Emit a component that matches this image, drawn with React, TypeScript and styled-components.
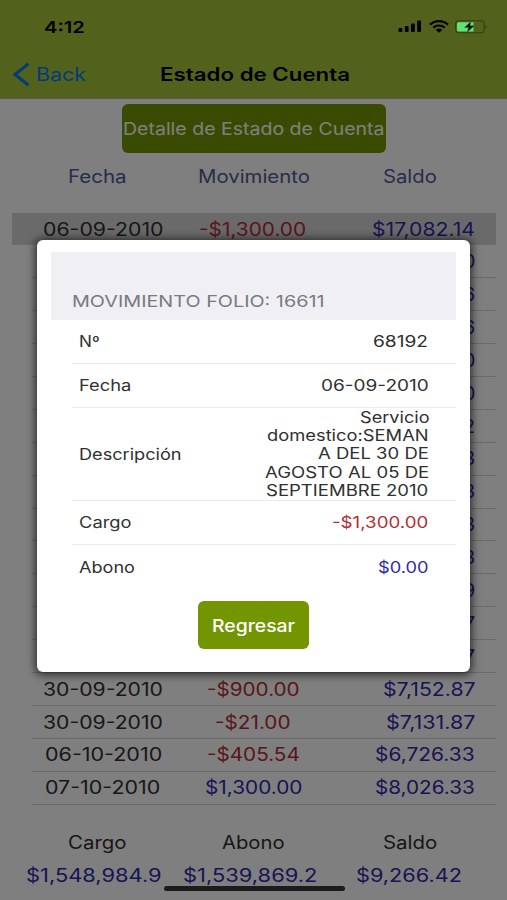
import React, { useLayoutEffect, useRef, useState } from 'react';
import styled, { createGlobalStyle } from 'styled-components';

const GlobalStyle = createGlobalStyle`
  * { box-sizing: border-box; }
  body { margin: 0; background: #fff; font-family: Inter, "Liberation Sans", sans-serif; }
`;

const RED = '#b42c34';
const BLUE = '#3228a8';

const Screen = styled.div`
  position: relative;
  width: 507px;
  height: 900px;
  overflow: hidden;
  background: #fff;
  color: #303030;
  display: flex;
  flex-direction: column;
`;

const FitBox = styled.span<{ $w: number; $size: number; $weight: number; $color?: string }>`
  display: inline-block;
  flex: none;
  width: ${p => p.$w}px;
  font-size: ${p => p.$size}px;
  font-weight: ${p => p.$weight};
  line-height: 1;
  padding-top: 1.5px;
  color: ${p => p.$color ?? 'inherit'};
  text-align: left;
  white-space: nowrap;
`;

const FitInner = styled.span`
  display: inline-block;
  transform-origin: 0 50%;
`;

type FitProps = { w: number; size?: number; weight?: number; color?: string; children: string };

/* Expanded type: stretches its text horizontally to fill the given width. */
function Fit({ w, size = 18, weight = 400, color, children }: FitProps) {
  const ref = useRef<HTMLSpanElement>(null);
  const [scale, setScale] = useState(1.2);
  const full = w + 1;
  useLayoutEffect(() => {
    if (ref.current) setScale(full / ref.current.offsetWidth);
  }, [full, children]);
  return (
    <FitBox $w={full} $size={size} $weight={weight} $color={color}>
      <FitInner ref={ref} style={{ transform: `scaleX(${scale})` }}>{children}</FitInner>
    </FitBox>
  );
}

const Header = styled.header`
  height: 98.5px;
  flex: none;
  background: #a4c438;
  border-bottom: 1px solid #b0b8a0;
  color: #000;
`;

const StatusBar = styled.div`
  height: 53px;
  display: flex;
  align-items: center;
  justify-content: space-between;
  padding: 0 18px 0 43.5px;
`;

const StatusIcons = styled.div`
  display: flex;
  align-items: center;
  gap: 7px;
  svg { display: block; }
`;

const NavBar = styled.div`
  height: 42px;
  display: grid;
  grid-template-columns: 159.5px 191px 1fr;
  align-items: center;
`;

const BackLink = styled.div`
  display: flex;
  align-items: center;
  gap: 6px;
  padding-left: 12px;
  color: #0a78f0;
`;

const Button = styled.button<{ $w: number }>`
  width: ${p => p.$w}px;
  height: 48.5px;
  flex: none;
  border: 0;
  padding: 0;
  border-radius: 6px;
  background: #739600;
  color: #fff;
  font-family: inherit;
  display: flex;
  align-items: center;
  justify-content: center;
`;

const DetailBar = styled.div`
  padding: 5.5px 0 0 0.5px;
  display: flex;
  justify-content: center;
`;

const Triple = styled.div<{ $h: number }>`
  flex: none;
  height: ${p => p.$h}px;
  padding: 0 18.75px;
  display: grid;
  grid-template-columns: repeat(3, 1fr);
  align-items: center;
  justify-items: center;
`;

const TotalValue = styled.div<{ $shift?: boolean }>`
  display: flex;
  padding-right: ${p => (p.$shift ? 7 : 2)}px;
`;

const Table = styled.div`
  margin-top: 13.5px;
  flex: none;
  height: 592px;
  display: grid;
  grid-template-rows: repeat(18, 1fr);
  padding: 0 11px 0 12px;
`;

const Row = styled.div<{ $selected?: boolean }>`
  display: grid;
  grid-template-columns: 20px 170.5px 1px 99px 1fr;
  align-items: stretch;
  padding-top: ${p => (p.$selected ? 1.5 : 0)}px;
  background: ${p => (p.$selected ? '#d4d4d4' : 'transparent')};
`;

const Cell = styled.div<{ $kind: 'date' | 'move' | 'saldo' }>`
  display: flex;
  align-items: center;
  min-width: 0;
  border-bottom: 1px solid #d4d4d6;
  grid-column: ${p => ({ date: '2 / 4', move: '4', saldo: '5' })[p.$kind]};
  justify-content: ${p => (p.$kind === 'saldo' ? 'flex-end' : 'center')};
  padding-right: ${p => ({ date: 29.5, move: 0, saldo: 21 })[p.$kind]}px;
`;

const Spacer = styled.div`
  height: 20.5px;
  flex: none;
`;

const Backdrop = styled.div`
  position: absolute;
  inset: 0;
  background: rgba(0, 0, 0, 0.5);
  padding: 240px 0 0 37px;
`;

const Dialog = styled.section`
  width: 432.5px;
  height: 432px;
  border-radius: 6px;
  background: #fff;
  box-shadow: 0 1px 9px 2px rgba(0, 0, 0, 0.65);
  padding: 11.5px 13.5px 0 14px;
  display: flex;
  flex-direction: column;
  align-items: stretch;
`;

const DialogTitle = styled.div`
  height: 68.5px;
  flex: none;
  background: #efeff4;
  color: #7a7a7e;
  display: flex;
  align-items: flex-end;
  padding: 0 0 11px 20.5px;
`;

const Field = styled.div<{ $h: number; $last?: boolean }>`
  height: ${p => p.$h}px;
  flex: none;
  margin-left: 21px;
  padding: 0 27.5px 0 6.5px;
  border-bottom: 1px solid ${p => (p.$last ? 'transparent' : '#ececee')};
  display: flex;
  align-items: center;
  justify-content: space-between;
`;

const Lines = styled.div`
  display: flex;
  flex-direction: column;
  align-items: flex-end;
`;

const Line = styled.div`
  height: 18.4px;
  display: flex;
  align-items: center;
`;

const DialogActions = styled.div`
  padding: 11.5px 0 0 0;
  display: flex;
  justify-content: center;
`;

const HomeIndicator = styled.div`
  position: absolute;
  left: 164px;
  top: 885.5px;
  width: 180.5px;
  height: 5.5px;
  border-radius: 3px;
  background: #1c1c1c;
`;

const BatteryLayer = styled.div`
  position: absolute;
  right: 19px;
  top: 19.5px;
  svg { display: block; }
`;

const BatterySlot = styled.div`
  width: 33px;
`;

function Chevron() {
  return (
    <svg width="18" height="25" viewBox="0 0 18 25" fill="none">
      <path d="M16.5 1.8 3 12.5 16.5 23.2" stroke="currentColor" strokeWidth="3" />
    </svg>
  );
}

function Signal() {
  return (
    <svg width="24" height="13" viewBox="0 0 24 13" fill="#000">
      <rect x="0.5" y="8" width="3.8" height="4" rx="1" />
      <rect x="6.8" y="6" width="3.8" height="6" rx="1" />
      <rect x="13" y="3.5" width="3.8" height="8.5" rx="1" />
      <rect x="19.2" y="0.5" width="3.8" height="11.5" rx="1" />
    </svg>
  );
}

function Wifi() {
  return (
    <svg width="20" height="13" viewBox="0 0 20 13" fill="none" stroke="#000">
      <path d="M1 4.6C6 -.1 14 -.1 19 4.6" strokeWidth="2.3" />
      <path d="M4.2 7.6C7.5 4.7 12.5 4.7 15.8 7.6" strokeWidth="2.1" />
      <path d="M6.6 9.8Q10 7.3 13.4 9.8L10 12.8Z" fill="#000" stroke="none" />
    </svg>
  );
}

function Battery() {
  return (
    <svg width="33" height="14" viewBox="0 0 33 14">
      <rect x="0.6" y="0.8" width="28.6" height="12" rx="3.2" fill="none" stroke="#344010" strokeWidth="1.1" />
      <path d="M30.6 4.8Q32.8 6.8 30.6 8.8Z" fill="#344010" />
      <path d="M3.6 2.2H18.5V11.4H3.6Q2 11.4 2 9.8V3.8Q2 2.2 3.6 2.2Z" fill="#5de577" />
      <path d="M15.8 1.7 9.5 7.5H13.6L12.2 12 19.3 5.8H15Z" fill="#000" stroke="#52621c" strokeWidth=".5" />
    </svg>
  );
}

type Txt = [string, number];
type Movement = { date?: Txt; move?: Txt; saldo: Txt; positive?: boolean };

const tail = (d: string): Movement => ({ saldo: [d, 11] });

const movements: Movement[] = [
  { date: ['06-09-2010', 119.5], move: ['-$1,300.00', 106.5], saldo: ['$17,082.14', 102.5] },
  ...['0', '6', '6', '0', '0', '2', '3', '3', '3', '3', '9', '7', '7'].map(tail),
  { date: ['30-09-2010', 119], move: ['-$900.00', 92], saldo: ['$7,152.87', 91] },
  { date: ['30-09-2010', 119], move: ['-$21.00', 75], saldo: ['$7,131.87', 88.5] },
  { date: ['06-10-2010', 116], move: ['-$405.54', 92], saldo: ['$6,726.33', 99] },
  { date: ['07-10-2010', 114.5], move: ['$1,300.00', 96], saldo: ['$8,026.33', 99], positive: true },
];

const description: Txt[] = [
  ['Servicio', 68],
  ['domestico:SEMAN', 161],
  ['A DEL 30 DE', 110],
  ['AGOSTO AL 05 DE', 163],
  ['SEPTIEMBRE 2010', 161.5],
];

export default function App() {
  return (
    <>
      <GlobalStyle />
      <Screen>
        <Header>
          <StatusBar>
            <Fit w={40.5} size={16.5} weight={600}>4:12</Fit>
            <StatusIcons>
              <Signal />
              <Wifi />
              <BatterySlot />
            </StatusIcons>
          </StatusBar>
          <NavBar>
            <BackLink>
              <Chevron />
              <Fit w={49}>Back</Fit>
            </BackLink>
            <Fit w={188.5} weight={600}>Estado de Cuenta</Fit>
          </NavBar>
        </Header>

        <DetailBar>
          <Button $w={263.5}>
            <Fit w={261} size={17.5} weight={400}>Detalle de Estado de Cuenta</Fit>
          </Button>
        </DetailBar>
        <Triple $h={46.5}>
          <Fit w={57} color="#505a98">Fecha</Fit>
          <Fit w={111} color="#505a98">Movimiento</Fit>
          <Fit w={53} color="#505a98">Saldo</Fit>
        </Triple>

        <Table>
          {movements.map((m, i) => (
            <Row key={i} $selected={i === 0}>
              <Cell $kind="date">{m.date && <Fit w={m.date[1]}>{m.date[0]}</Fit>}</Cell>
              <Cell $kind="move">
                {m.move && <Fit w={m.move[1]} color={m.positive ? BLUE : RED}>{m.move[0]}</Fit>}
              </Cell>
              <Cell $kind="saldo"><Fit w={m.saldo[1]} color={BLUE}>{m.saldo[0]}</Fit></Cell>
            </Row>
          ))}
        </Table>
        <Spacer />
        <Triple $h={34}>
          <Fit w={58}>Cargo</Fit>
          <Fit w={62}>Abono</Fit>
          <Fit w={53.5}>Saldo</Fit>
        </Triple>
        <Triple $h={32}>
          <TotalValue $shift><Fit w={135} color={BLUE}>$1,548,984.9</Fit></TotalValue>
          <TotalValue $shift><Fit w={134} color={BLUE}>$1,539,869.2</Fit></TotalValue>
          <TotalValue><Fit w={105} color={BLUE}>$9,266.42</Fit></TotalValue>
        </Triple>

        <Backdrop>
          <Dialog>
            <DialogTitle><Fit w={252} size={16.5}>MOVIMIENTO FOLIO: 16611</Fit></DialogTitle>
            <Field $h={43.5}>
              <Fit w={20} size={15.5}>Nº</Fit>
              <Fit w={54.5} size={15.5}>68192</Fit>
            </Field>
            <Field $h={44}>
              <Fit w={51} size={15.5}>Fecha</Fit>
              <Fit w={107} size={15.5}>06-09-2010</Fit>
            </Field>
            <Field $h={93}>
              <Fit w={102} size={15.5}>Descripción</Fit>
              <Lines>
                {description.map(([text, w]) => (
                  <Line key={text}><Fit w={w} size={15.5}>{text}</Fit></Line>
                ))}
              </Lines>
            </Field>
            <Field $h={44.5}>
              <Fit w={51} size={15.5}>Cargo</Fit>
              <Fit w={95.5} size={15.5} color={RED}>-$1,300.00</Fit>
            </Field>
            <Field $h={44} $last>
              <Fit w={55} size={15.5}>Abono</Fit>
              <Fit w={49.5} size={15.5} color={BLUE}>$0.00</Fit>
            </Field>
            <DialogActions>
              <Button $w={110.5}><Fit w={82} size={17.5} weight={500}>Regresar</Fit></Button>
            </DialogActions>
          </Dialog>
        </Backdrop>
        <BatteryLayer><Battery /></BatteryLayer>
        <HomeIndicator />
      </Screen>
    </>
  );
}
